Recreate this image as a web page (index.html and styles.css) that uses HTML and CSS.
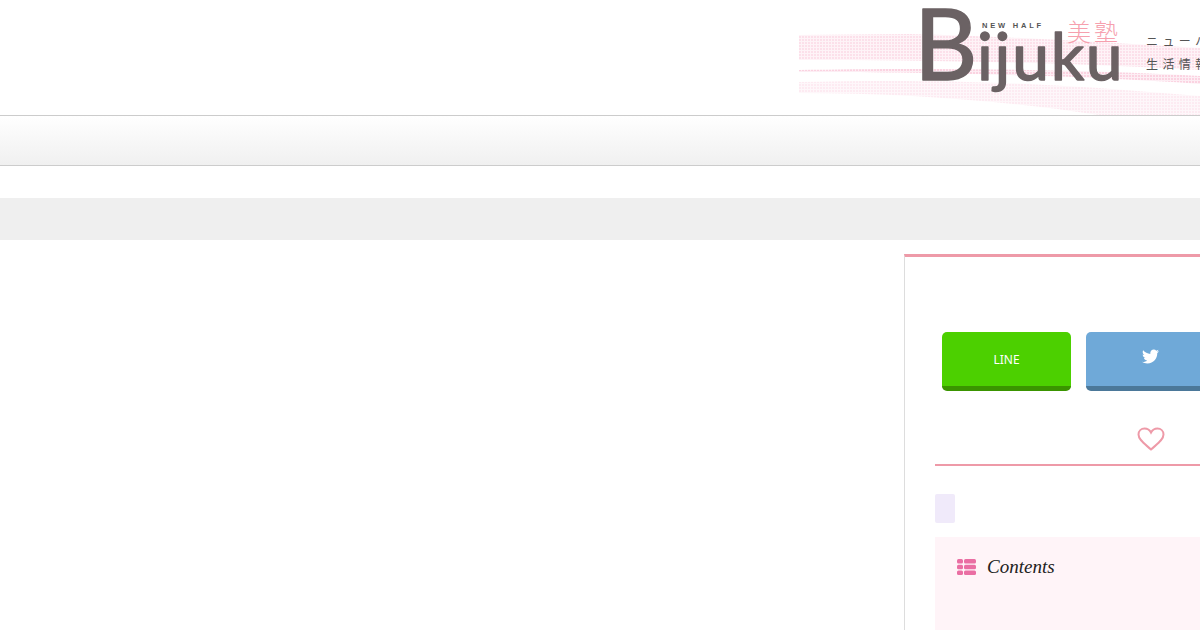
FILE: index.html
```html
<!DOCTYPE html>
<html lang="ja">
<head>
  <meta charset="UTF-8" />
  <meta name="viewport" content="width=device-width, initial-scale=1.0" />
  <title>Bijuku</title>
  <link rel="stylesheet" href="styles.css">
</head>
<body>
  <!-- Site header -->
  <header class="site-header">
    <div class="brand">
      <!-- Pink dotted swoosh behind the logo -->
      <svg class="swoosh" width="401" height="115" viewBox="0 0 401 115">
        <defs>
          <pattern id="dots" width="3" height="3" patternUnits="userSpaceOnUse">
            <rect width="3" height="3" fill="#fdeef4"></rect>
            <rect width="2" height="2" fill="#fbd3e1"></rect>
          </pattern>
        </defs>
        <path d="M0 35 L110 34 C200 36 300 42 401 48 L401 70 C260 62 120 60 0 60 Z" fill="url(#dots)" opacity="0.7"></path>
        <path d="M0 70 C100 68 260 68 401 76 L401 84 C260 74 100 72 0 72 Z" fill="url(#dots)"></path>
        <path d="M0 82 C90 80 180 80 300 88 L401 96 L401 115 L300 115 C200 100 100 93 0 93 Z" fill="url(#dots)" opacity="0.45"></path>
      </svg>
      <svg class="logo" width="210" height="105" viewBox="0 0 210 105">
        <text class="logo-name" x="2" y="80"><tspan class="logo-cap">B</tspan><tspan dx="-2">ijuku</tspan></text>
        <text class="logo-small" x="70" y="28">NEW HALF</text>
        <text class="logo-kanji" x="155" y="41">美塾</text>
      </svg>
      <p class="tagline">ニューハーフのための<br>生活情報サイト</p>
    </div>
  </header>
  <!-- Global nav bar -->
  <nav class="global-nav"></nav>
  <!-- Breadcrumb band -->
  <div class="crumbs"></div>
  <div class="page">
    <main class="main-col"></main>
    <aside class="sidebar">
      <div class="share">
        <a class="share-btn line">LINE</a>
        <a class="share-btn twitter">
          <svg width="17" height="17" viewBox="0 0 512 512"><path fill="#fff" d="M459.37 151.716c.325 4.548.325 9.097.325 13.645 0 138.72-105.583 298.558-298.558 298.558-59.452 0-114.68-17.219-161.137-47.106 8.447.974 16.568 1.299 25.34 1.299 49.055 0 94.213-16.568 130.274-44.832-46.132-.975-84.792-31.188-98.112-72.772 6.498.974 12.995 1.624 19.818 1.624 9.421 0 18.843-1.3 27.614-3.573-48.081-9.747-84.143-51.98-84.143-102.985v-1.299c13.969 7.797 30.214 12.67 47.431 13.319-28.264-18.843-46.781-51.005-46.781-87.391 0-19.492 5.197-37.36 14.294-52.954 51.655 63.675 129.3 105.258 216.365 109.807-1.624-7.797-2.599-15.918-2.599-24.04 0-57.828 46.782-104.934 104.934-104.934 30.213 0 57.502 12.67 76.67 33.137 23.715-4.548 46.456-13.32 66.599-25.34-7.798 23.715-22.665 44.832-44.832 58.1 21.117-2.274 41.584-8.122 60.426-16.243-14.292 20.791-32.161 39.308-52.628 54.253z"></path></svg>
        </a>
      </div>
      <div class="heart-title">
        <svg width="28" height="24" viewBox="0 0 28 24"><path fill="none" stroke="#ee9aa8" stroke-width="2" d="M14 22.5 C8 17 1.5 13 1.5 7.5 C1.5 3.8 4.3 1.5 7.5 1.5 C10.3 1.5 12.7 3 14 5.5 C15.3 3 17.7 1.5 20.5 1.5 C23.7 1.5 26.5 3.8 26.5 7.5 C26.5 13 20 17 14 22.5 Z"></path></svg>
      </div>
      <div class="tag-chip"></div>
      <section class="contents-box">
        <h3 class="contents-title">
          <svg width="19" height="16" viewBox="0 0 19 16">
            <g fill="#ea6ea3">
              <rect y="0" width="6" height="4.4" rx="1.5"></rect><rect x="7" y="0" width="12" height="4.4" rx="1.5"></rect>
              <rect y="5.8" width="6" height="4.4" rx="1.5"></rect><rect x="7" y="5.8" width="12" height="4.4" rx="1.5"></rect>
              <rect y="11.6" width="6" height="4.4" rx="1.5"></rect><rect x="7" y="11.6" width="12" height="4.4" rx="1.5"></rect>
            </g>
          </svg>
          Contents
        </h3>
      </section>
    </aside>
  </div>
</body>
</html>
```

FILE: styles.css
```css
/* General page styling */
html, body { margin: 0; height: 630px; overflow: hidden; background: #fff; font-family: "Noto Sans", "Noto Sans CJK JP", sans-serif; }

/* Header */
.site-header { height: 115px; border-bottom: 1px solid #ccc; display: flex; justify-content: flex-end; }
.brand { position: relative; width: 401px; height: 115px; overflow: hidden; display: flex; align-items: flex-start; }
.swoosh { position: absolute; left: 0; top: 0; }
.logo { position: relative; flex: none; margin-left: 113px; }
.logo-name { font-family: "Lato", sans-serif; font-size: 66px; letter-spacing: 1.7px; fill: #6b6264; stroke: #6b6264; stroke-width: 1.5px; stroke-linejoin: round; }
.logo-cap { font-size: 98px; }
.logo-small { font-family: "Liberation Sans", sans-serif; font-weight: bold; font-size: 7.5px; letter-spacing: 2.8px; fill: #555; }
.logo-kanji { font-family: "Noto Sans CJK JP", sans-serif; font-weight: 300; font-size: 24px; letter-spacing: 3px; fill: #f6a0ae; }
.tagline { position: relative; flex: none; margin: 29px 0 0 24px; font-family: "Noto Sans CJK JP", sans-serif; font-size: 12px; line-height: 23px; letter-spacing: 4.4px; color: #555; white-space: nowrap; }

/* Nav and breadcrumb bands */
.global-nav { height: 49px; border-bottom: 1px solid #ccc; background: linear-gradient(#fff, #f0f0f0); }
.crumbs { height: 42px; margin-top: 32px; background: #efefef; }

/* Two column page */
.page { display: grid; grid-template-columns: 904px 494px; margin-top: 14px; }
.sidebar { height: 376px; box-sizing: border-box; border-top: 3px solid #ee9aa8; border-left: 1px solid #ddd; padding: 75px 30px 0; }

/* Share buttons */
.share { display: flex; gap: 15px; padding-left: 7px; }
.share-btn { flex: none; box-sizing: border-box; width: 129px; height: 59px; border-radius: 5px; border-bottom: 5px solid; display: flex; align-items: center; justify-content: center; color: #fff; font-size: 12px; }
.line { background: #4cd000; border-color: #3a9400; }
.twitter { background: #6fa9d8; border-color: #4b7899; padding-bottom: 6px; }

/* Heading with the heart */
.heart-title { margin-top: 36px; height: 37px; padding-right: 2px; border-bottom: 2px solid #ee9aa8; text-align: center; }

.tag-chip { width: 20px; height: 29px; margin-top: 28px; background: #f0eafa; border-radius: 2px; }

/* Contents box */
.contents-box { height: 100px; margin-top: 14px; padding: 18px 22px; background: #fff4f8; }
.contents-title { margin: 0; display: flex; align-items: center; gap: 11px; font-family: "Liberation Serif", serif; font-style: italic; font-weight: normal; font-size: 19px; line-height: 24px; color: #222; }
```
